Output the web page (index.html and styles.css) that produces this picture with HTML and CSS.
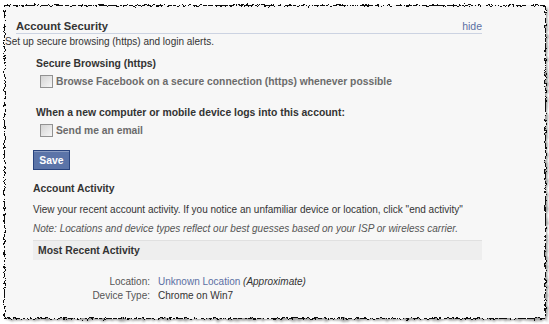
FILE: index.html
```html
<!DOCTYPE html>
<html>
<head>
<meta charset="utf-8">
<link rel="stylesheet" href="styles.css">
</head>
<body>
<svg class="paper" width="549" height="324" aria-hidden="true">
  <defs>
    <filter id="rough" x="-3%" y="-3%" width="106%" height="106%">
      <feTurbulence type="fractalNoise" baseFrequency="0.3" numOctaves="3" seed="7" result="n"/>
      <feDisplacementMap in="SourceGraphic" in2="n" scale="5" xChannelSelector="R" yChannelSelector="G"/>
    </filter>
    <filter id="shadow" x="-3%" y="-3%" width="106%" height="106%">
      <feTurbulence type="fractalNoise" baseFrequency="0.3" numOctaves="3" seed="7" result="n"/>
      <feDisplacementMap in="SourceGraphic" in2="n" scale="5" xChannelSelector="R" yChannelSelector="G" result="d"/>
      <feGaussianBlur in="d" stdDeviation="1.2"/>
    </filter>
  </defs>
  <rect x="6.5" y="7.5" width="541" height="313" fill="#9a9a9a" filter="url(#shadow)"/>
  <rect x="4.5" y="5.5" width="541" height="313" fill="#f7f7f7" stroke="#111" stroke-width="1" filter="url(#rough)"/>
</svg>
<div class="content">
  <div class="head">
    <span class="title">Account Security</span>
    <span class="link hide">hide</span>
  </div>
  <div class="intro">Set up secure browsing (https) and login alerts.</div>

  <div class="section">
    <div class="sub">Secure Browsing (https)</div>
    <div class="check"><span class="box"></span><span class="lbl">Browse Facebook on a secure connection (https) whenever possible</span></div>
  </div>

  <div class="section second">
    <div class="sub">When a new computer or mobile device logs into this account:</div>
    <div class="check"><span class="box"></span><span class="lbl">Send me an email</span></div>
  </div>

  <div class="activity">
    <button class="save">Save</button>
    <div class="sub2">Account Activity</div>
    <div class="text">View your recent account activity. If you notice an unfamiliar device or location, click "end activity"</div>
    <div class="note">Note: Locations and device types reflect our best guesses based on your ISP or wireless carrier.</div>
    <div class="recent">Most Recent Activity</div>
    <div class="details">
      <span class="k">Location:</span><span class="v"><span class="link">Unknown Location</span> <i>(Approximate)</i></span>
      <span class="k">Device Type:</span><span class="v">Chrome on Win7</span>
    </div>
  </div>
</div>
</body>
</html>
```
FILE: styles.css
```css
html, body {
  margin: 0;
  padding: 0;
  background: #fff;
}
body {
  width: 549px;
  height: 324px;
  overflow: hidden;
  position: relative;
  font-family: "Liberation Sans", Arial, sans-serif;
  font-size: 10px;
  color: #333;
}
.paper {
  position: absolute;
  left: 0;
  top: 0;
}
.content {
  position: relative;
  padding-top: 20px;
  white-space: nowrap;
}
.head {
  margin-left: 16px;
  width: 466px;
  display: flex;
  justify-content: space-between;
  align-items: baseline;
  line-height: 13px;
  border-bottom: 1px solid #ccd3e2;
  padding-bottom: 0;
}
.title {
  font-size: 11.2px;
  font-weight: bold;
  color: #333;
}
.link {
  color: #5b6fa3;
}
.hide {
  font-size: 10.5px;
}
.intro {
  margin-left: 5px;
  line-height: 14px;
  margin-top: 1px;
}
.section {
  margin-left: 36px;
  margin-top: 8px;
}
.section.second {
  margin-top: 18px;
}
.sub {
  font-weight: bold;
  font-size: 10.4px;
  line-height: 14px;
}
.check {
  display: flex;
  align-items: center;
  margin-top: 3px;
  margin-left: 4px;
  height: 14px;
}
.second .check {
  margin-top: 3px;
}
.box {
  width: 11px;
  height: 11px;
  border: 1px solid #929292;
  background: linear-gradient(135deg, #d4d4d4, #f6f6f6);
  margin-right: 3px;
}
.lbl {
  font-weight: bold;
  font-size: 10.3px;
  color: #6b6b6b;
}
.activity {
  margin-left: 33px;
  width: 449px;
}
.save {
  display: block;
  margin-top: 13px;
  width: 37px;
  height: 20px;
  padding: 0;
  background: #5b74a8;
  border: 1px solid #29447e;
  box-shadow: inset 0 1px 0 #8a9cc2;
  color: #fff;
  font-family: inherit;
  font-size: 10.4px;
  font-weight: bold;
}
.sub2 {
  font-weight: bold;
  font-size: 10.4px;
  line-height: 14px;
  margin-top: 12px;
}
.text {
  line-height: 14px;
  margin-top: 7px;
}
.note {
  line-height: 14px;
  margin-top: 5px;
  font-style: italic;
  color: #555;
}
.recent {
  margin-top: 4px;
  height: 19px;
  line-height: 19px;
  background: #eeeeee;
  border-top: 1px solid #e0e0e0;
  padding-left: 5px;
  font-weight: bold;
  font-size: 10.4px;
}
.details {
  display: grid;
  grid-template-columns: 117px auto;
  column-gap: 8px;
  row-gap: 0;
  margin-top: 15px;
  line-height: 14px;
}
.k {
  text-align: right;
  color: #555;
}
.v i {
  color: #333;
}
```
